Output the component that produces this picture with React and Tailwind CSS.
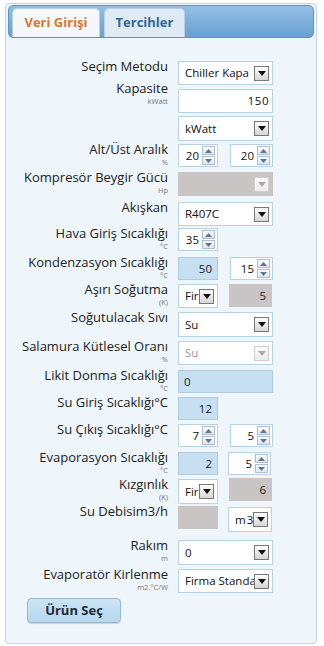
import React from "react";

const FONT = { fontFamily: '"Open Sans", "DejaVu Sans", sans-serif' };

function Arrow({ disabled }) {
  return (
    <div
      className={
        "w-[15px] h-[15px] shrink-0 flex items-center justify-center border " +
        (disabled
          ? "border-[#cfcfcf] bg-gradient-to-b from-[#fbfbfb] to-[#ececec]"
          : "border-[#777] bg-gradient-to-b from-[#ffffff] to-[#d6d6d6]")
      }
    >
      <svg width="8" height="5" viewBox="0 0 8 5">
        <polygon points="0,0 8,0 4,5" fill={disabled ? "#a9a9a9" : "#111"} />
      </svg>
    </div>
  );
}

function Select({ value, w = "w-[95px]", h = "h-[25px]", disabled, gray, mono }) {
  return (
    <div
      className={
        w +
        " " +
        h +
        " flex items-center pl-[6px] pr-[3px] border " +
        (gray ? "bg-[#c9c5c5] border-[#c9c5c5]" : "bg-white border-[#b9d3e6]")
      }
    >
      <div
        className={
          "flex-1 overflow-hidden whitespace-nowrap text-[11.5px] " +
          (disabled ? "text-[#9a9a9a]" : "text-[#111]") +
          (mono ? " tracking-[1px]" : "")
        }
      >
        {value}
      </div>
      <Arrow disabled={disabled} />
    </div>
  );
}

function SpinBtn({ up }) {
  return (
    <div className="h-[9px] w-[13px] flex items-center justify-center border border-[#aebfd2] bg-gradient-to-b from-[#fdfdfe] to-[#dde6f0]">
      <svg width="7" height="4" viewBox="0 0 7 4">
        <polygon points={up ? "0,4 7,4 3.5,0" : "0,0 7,0 3.5,4"} fill="#5b7597" />
      </svg>
    </div>
  );
}

function Spinner({ value, w = "w-[40px]" }) {
  return (
    <div className={w + " h-[23px] flex items-center bg-white border border-[#b9d3e6] pr-[2px]"}>
      <div className="flex-1 text-right pr-[3px] text-[11.5px] text-[#111]">{value}</div>
      <div className="flex flex-col gap-[1px]">
        <SpinBtn up />
        <SpinBtn />
      </div>
    </div>
  );
}

function Box({ value, w = "w-[40px]", kind = "blue", align = "right" }) {
  const cls =
    kind === "blue"
      ? "bg-[#c6dff1] border-[#aecde4]"
      : "bg-[#c9c5c5] border-[#c9c5c5]";
  return (
    <div
      className={
        w +
        " h-[23px] flex items-center border px-[5px] text-[11.5px] text-[#222] " +
        cls +
        (align === "right" ? " justify-end" : " justify-start")
      }
    >
      {value}
    </div>
  );
}

function Row({ label, unit, children, labelClass = "-mt-[2px]", rowClass = "h-[28px]" }) {
  return (
    <div className={"flex items-start " + rowClass}>
      <div className={"w-[162px] text-right " + labelClass}>
        <div className="text-[13px] leading-[15px] text-[#222] whitespace-nowrap">{label}</div>
        {unit && (
          <div className="text-[7.5px] leading-[8px] mt-[1px] text-[#777] whitespace-nowrap">{unit}</div>
        )}
      </div>
      <div className="ml-[10px] flex items-start">{children}</div>
    </div>
  );
}

export default function App() {
  return (
    <div style={FONT} className="w-[324px] h-[646px] bg-white pt-[3px] pl-[5px]">
      <div className="w-[312px] h-[641px] border border-[#c3d5e6] rounded-[4px] bg-[#eef5fb] px-[2px] pt-[1px]">
        {/* Header with tabs */}
        <div className="h-[33px] rounded-[5px] border border-[#5f93c4] bg-gradient-to-b from-[#93bfe4] to-[#6aa0d2] flex items-end pl-[3px] gap-[4px]">
          <div className="w-[88px] h-[29px] rounded-t-[5px] bg-[#f4f8fc] border border-b-0 border-[#b8cfe4] flex items-center justify-center">
            <span className="text-[13px] font-bold text-[#d9772c]">Veri Girişi</span>
          </div>
          <div className="w-[81px] h-[29px] rounded-t-[5px] bg-[#dfeaf5] border border-b-0 border-[#b8cfe4] flex items-center justify-center">
            <span className="text-[13px] font-bold text-[#2c6899]">Tercihler</span>
          </div>
        </div>

        <div className="-ml-[2px] pt-[23px]">
          <Row label="Seçim Metodu">
            <Select value="Chiller Kapa" h="h-[24px]" />
          </Row>
          <Row label="Kapasite" unit="kWatt" labelClass="-mt-[8px]" rowClass="h-[27px]">
            <div className="h-[24px] w-[95px] bg-white border border-[#b9d3e6] flex items-center justify-end pr-[3px] text-[11.5px] text-[#111] tracking-[0.5px]">
              150
            </div>
          </Row>
          <Row label="">
            <Select value="kWatt" />
          </Row>
          <Row label="Alt/Üst Aralık" unit="%">
            <Spinner value="20" />
            <div className="ml-[12px]">
              <Spinner value="20" w="w-[43px]" />
            </div>
          </Row>
          <Row label="Kompresör Beygir Gücü" unit="Hp" rowClass="h-[30px]">
            <Select value="" gray disabled h="h-[24px]" />
          </Row>
          <Row label="Akışkan" rowClass="h-[26px]">
            <Select value="R407C" h="h-[24px]" />
          </Row>
          <Row label="Hava Giriş Sıcaklığı" unit="°C" rowClass="h-[29px]">
            <Spinner value="35" />
          </Row>
          <Row label="Kondenzasyon Sıcaklığı" unit="°C" rowClass="h-[27px]">
            <Box value="50" />
            <div className="ml-[12px]">
              <Spinner value="15" w="w-[43px]" />
            </div>
          </Row>
          <Row label="Aşırı Soğutma" unit="(K)" rowClass="h-[28px]">
            <Select value="Fir" w="w-[40px]" h="h-[24px]" />
            <div className="ml-[11px]">
              <Box value="5" kind="gray" w="w-[43px]" />
            </div>
          </Row>
          <Row label="Soğutulacak Sıvı" rowClass="h-[29px]">
            <Select value="Su" />
          </Row>
          <Row label="Salamura Kütlesel Oranı" unit="%" rowClass="h-[29px]">
            <Select value="Su" disabled h="h-[24px]" />
          </Row>
          <Row label="Likit Donma Sıcaklığı" unit="°C" rowClass="h-[27px]">
            <Box value="0" w="w-[95px]" align="left" />
          </Row>
          <Row label="Su Giriş Sıcaklığı°C" rowClass="h-[27px]">
            <Box value="12" />
          </Row>
          <Row label="Su Çıkış Sıcaklığı°C" rowClass="h-[28px]">
            <Spinner value="7" />
            <div className="ml-[12px]">
              <Spinner value="5" w="w-[43px]" />
            </div>
          </Row>
          <Row label="Evaporasyon Sıcaklığı" unit="°C" rowClass="h-[27px]">
            <Box value="2" />
            <div className="ml-[10px]">
              <Spinner value="5" w="w-[43px]" />
            </div>
          </Row>
          <Row label="Kızgınlık" unit="(K)" rowClass="h-[27px]">
            <Select value="Fir" w="w-[40px]" h="h-[25px]" />
            <div className="ml-[11px] -mt-[1px]">
              <Box value="6" kind="gray" w="w-[43px]" />
            </div>
          </Row>
          <Row label="Su Debisim3/h" rowClass="h-[34px]">
            <Box value="" kind="gray" />
            <div className="ml-[10px] mt-[1px]">
              <Select value="m3" w="w-[44px]" h="h-[25px]" mono />
            </div>
          </Row>
          <Row label="Rakım" unit="m" rowClass="h-[29px]">
            <Select value="0" />
          </Row>
          <Row label="Evaporatör Kirlenme" unit="m2.°C/W" rowClass="h-[28px]">
            <Select value="Firma Standa" h="h-[24px]" />
          </Row>
          <div className="pl-[21px]">
            <button className="w-[94px] h-[25px] rounded-[4px] border border-[#9bb8cf] bg-gradient-to-b from-[#cbe4f5] to-[#b6d7ee] text-[13px] font-bold text-[#1e2a36] shadow-[0_1px_1px_rgba(0,0,0,0.15)]">
              Ürün Seç
            </button>
          </div>
        </div>
      </div>
    </div>
  );
}
